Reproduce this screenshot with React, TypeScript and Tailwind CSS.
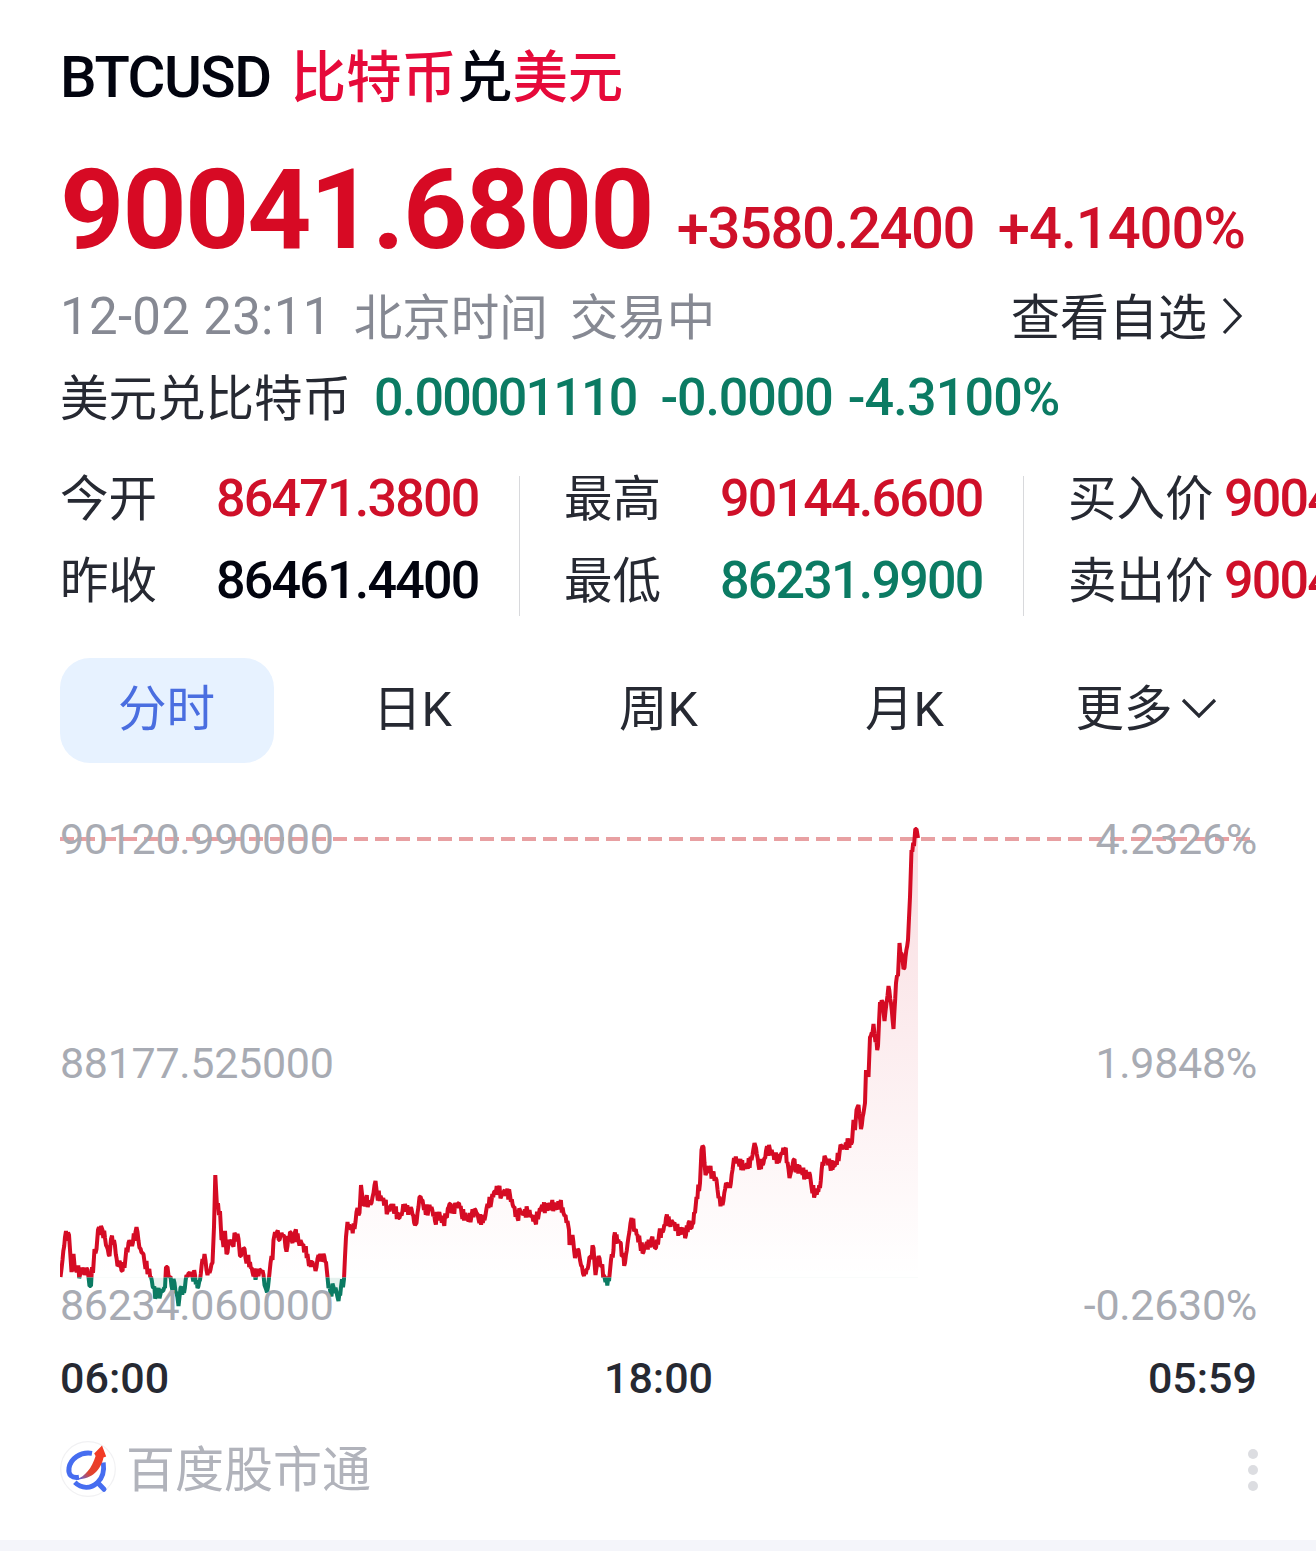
import { useState } from "react";

const CHART_LEFT = 60;
const CHART_TOP = 763;
const CHART_WIDTH = 1197;
const CHART_HEIGHT = 577;
const BASE_Y = 1277.5;

const trend =
  "60.5,1277 62.5,1260 65,1237 69,1235 70.5,1257 71.5,1272 73.5,1254 75,1271 77.5,1268 80,1275 82.5,1268 84.5,1275 86.5,1268 88.5,1277 89.5,1286 91,1286 92,1267 93,1273 94.5,1249 96.5,1249 98,1230 100,1235 101,1226 102.5,1230 105,1238 107,1247 109.5,1256 111,1239 114,1240 117.5,1266 119.5,1261 122.5,1271 125.5,1258 128.5,1243 133,1242 135.5,1232 137.5,1232 139.5,1248 142.5,1253 144.5,1262 148.5,1271 151,1277 153.5,1288 156,1296 157.5,1293 160.5,1294 162.5,1291 165,1288 166,1267 167.5,1267 169.5,1277 171.5,1286 174.5,1283 176.5,1293 178.5,1306 180.5,1288 184,1293 186.5,1275 189.5,1273 192.5,1277 195,1275 197.5,1288 200,1280 202.5,1259 204.5,1254 206.5,1270 209.5,1273 212.5,1263 214,1227 215.3,1175 217,1207 220,1211 221.5,1240 223.5,1247 225,1231 226.5,1254 229.5,1240 232.5,1245 235.5,1235 238.5,1239 240,1256 243.5,1248 245.5,1258 247.5,1258 252.5,1272 256.5,1275 260.5,1270 263.5,1275 264.5,1285 266,1289 268,1287 269.5,1273 270.5,1263 272.5,1260 273.5,1240 275,1232 277,1232 279.5,1240 281.5,1233 283.5,1235 285.5,1247 287.5,1246 290,1232 292.5,1243 295,1232 298.5,1241 301.5,1243 305,1250 307.5,1254 309,1266 312.5,1262 315.5,1271 318.5,1255 322,1260 323.5,1254 326,1262 327.5,1277 328.5,1288 330.5,1293 333.5,1287 336.5,1292 338.5,1301 341,1287 344,1279 346,1237 347.5,1222 350,1228 354.5,1229 356.5,1212 359.5,1213 361,1185 363.5,1206 366,1199 368.5,1204 371.5,1203 375.5,1181 377,1194 381.5,1199 385,1202 387.5,1212 391.5,1205 395,1210 398.5,1218 402.5,1211 405,1204 406.5,1211 411.5,1209 415,1225 416.5,1223 419.5,1197 422.5,1200 424,1210 428.5,1210 431.5,1207 435,1221 438.5,1214 443.5,1222 446,1217 449.5,1204 452.5,1211 456,1206 459,1203 461.5,1213 467.5,1219 471.5,1216 475.5,1210 478.5,1219 484.5,1220 487.5,1204 491.5,1201 494,1192 498.5,1189 501.5,1196 504,1191 506.5,1193 510,1195 513.5,1207 517.5,1218 520,1210 524,1214 527.5,1211 531.5,1216 535,1221 539,1213 541.5,1207 546.5,1208 551.5,1205 556.5,1208 560,1203 563.5,1213 567.5,1221 569,1230 569.5,1245 572.5,1235 575,1258 578.5,1250 580,1260 584,1276 588.5,1265 590.5,1257 593.5,1248 595.5,1275 598.5,1256 601.5,1266 604,1275 605.5,1282 609,1281 611,1260 613.5,1250 614,1237 620,1242 622.5,1256 625,1263 628.5,1237 631.5,1218 635,1230 640,1243 643.5,1252 646,1245 649.5,1245 651.5,1239 656,1248 659,1235 663.5,1230 666,1218 669.5,1223 672.5,1222 676.5,1228 680,1233 682.5,1228 686,1235 688.5,1223 691.5,1228 695,1213 696.5,1197 700,1183 701.5,1150 703.5,1147 704.5,1163 705.5,1175 708.5,1167 712.5,1175 716.5,1180 718.5,1198 722.5,1205 726,1183 730,1188 732.5,1170 734,1158 738.5,1162 745,1168 751.5,1160 754.5,1143 756,1148 758.5,1165 763.5,1163 766,1151 770,1150 775,1157 779.5,1160 781.5,1153 785,1149 787.5,1162 789.5,1178 793.5,1160 796.5,1170 800,1168 805,1175 810,1175 811.5,1187 815,1194 820,1188 822.5,1162 825.5,1158 830,1165 835,1166 839.5,1153 841.5,1146 845,1147 848.5,1143 852,1142 853.5,1120 855,1130 856.5,1110 858.5,1105 861,1129 863.5,1113 865,1103 866,1070 868.5,1077 870,1037 872.5,1033 873.5,1024 875.5,1042 878,1046 880,1002 882.5,1002 884.5,1021 886.5,1003 888.5,986 891,1003 893.5,1029 896,983 898,976 899.5,943 901.5,953 903.5,969 905.5,957 908,940 910,897 911.5,850 914,846 915.3,829 916.5,829 918,838";

// fill in the minute ticks between the trend points
const addTicks = (line: string) => {
  const pts = line.split(" ").map((p) => p.split(",").map(Number));
  const out: string[] = [];
  let n = 0;
  pts.forEach(([x, y], i) => {
    out.push(`${x},${y}`);
    const next = pts[i + 1];
    if (!next) return;
    const steps = Math.floor((next[0] - x) / 0.83);
    const swing = Math.abs(next[1] - y) > 15 ? 1.5 : 5.5;
    for (let s = 1; s < steps; s++) {
      n++;
      const noise = (n % 2 ? 1 : -1) * Math.abs(Math.sin(n * 12.9898)) * swing;
      const px = x + ((next[0] - x) * s) / steps;
      const py = y + ((next[1] - y) * s) / steps + noise;
      out.push(`${px.toFixed(1)},${py.toFixed(1)}`);
    }
  });
  return out.join(" ");
};

const points = addTicks(trend);

const tabs = ["分时", "日K", "周K", "月K"];

const priceLabels = [
  { price: "90120.990000", percent: "4.2326%", top: "top-[46px]" },
  { price: "88177.525000", percent: "1.9848%", top: "top-[270px]" },
  { price: "86234.060000", percent: "-0.2630%", top: "top-[512px]" },
];

const stats = [
  [
    { label: "今开", value: "86471.3800", color: "text-[#cf1029]" },
    { label: "昨收", value: "86461.4400", color: "text-[#02040f]" },
  ],
  [
    { label: "最高", value: "90144.6600", color: "text-[#cf1029]" },
    { label: "最低", value: "86231.9900", color: "text-[#0b7b63]" },
  ],
  [
    { label: "买入价", value: "90041.6800", color: "text-[#cf1029]" },
    { label: "卖出价", value: "90042.6800", color: "text-[#cf1029]" },
  ],
];

const Chart: React.FC = () => {
  const area = `M60.5,${BASE_Y} L${points} L918,${BASE_Y} Z`;

  return (
    <div className="relative h-[577px] w-[1197px]">
      <svg
        className="block"
        width={CHART_WIDTH}
        height={CHART_HEIGHT}
        viewBox={`${CHART_LEFT} ${CHART_TOP} ${CHART_WIDTH} ${CHART_HEIGHT}`}
        fill="none"
      >
        <defs>
          <linearGradient id="fill" gradientUnits="userSpaceOnUse" x1="0" y1="829" x2="0" y2={BASE_Y}>
            <stop offset="0" stopColor="#d70a24" stopOpacity="0.14" />
            <stop offset="1" stopColor="#d70a24" stopOpacity="0" />
          </linearGradient>
          <clipPath id="above">
            <rect x="60" y="763" width="1197" height={BASE_Y - 763} />
          </clipPath>
          <clipPath id="below">
            <rect x="60" y={BASE_Y} width="1197" height="60" />
          </clipPath>
        </defs>
        <line x1="60" y1="839" x2="1257" y2="839" stroke="#e8a0a2" strokeWidth="4" strokeDasharray="14 7" />
        <g clipPath="url(#above)">
          <path d={area} fill="url(#fill)" />
          <polyline points={points} stroke="#d50b24" strokeWidth="4" strokeLinejoin="bevel" />
        </g>
        <g clipPath="url(#below)">
          <path d={area} fill="#0b7b63" fillOpacity="0.1" />
          <polyline points={points} stroke="#0b7b63" strokeWidth="4" strokeLinejoin="bevel" />
        </g>
      </svg>
      {priceLabels.map((item) => (
        <div
          key={item.price}
          className={`absolute left-0 flex h-[60px] w-full items-center justify-between text-[43px] tracking-[-0.3px] text-[#a8abb3] ${item.top}`}
        >
          <span>{item.price}</span>
          <span>{item.percent}</span>
        </div>
      ))}
    </div>
  );
};

const Logo: React.FC = () => (
  <svg width="56" height="56" viewBox="0 0 56 56" fill="none">
    <defs>
      <linearGradient id="arrow" x1="17" y1="38" x2="38" y2="14" gradientUnits="userSpaceOnUse">
        <stop offset="0" stopColor="#4a6cf0" />
        <stop offset="0.4" stopColor="#e0432f" />
        <stop offset="1" stopColor="#f23b25" />
      </linearGradient>
    </defs>
    <circle cx="28" cy="28" r="27.3" stroke="#f1f1f3" strokeWidth="1.2" />
    <path d="M32 12.4C20 10.5 10.500 18 9 27C8 34 12 37.500 19 36.300" stroke="#466df0" strokeWidth="5" />
    <path d="M43.300 21.500C44.500 30 43 36.500 37.500 41.500C31 48 21.500 48 14.800 41.300" stroke="#466df0" strokeWidth="4.800" />
    <path d="M38 42L44 48.300" stroke="#466df0" strokeWidth="5" strokeLinecap="round" />
    <path d="M16.500 38.300C25 35.500 32 27 35.600 15L34.200 12.500L42 4.500L46.200 15.500L43.500 16.500C41 28.500 32 38.800 16.500 38.300Z" fill="url(#arrow)" />
  </svg>
);

const App: React.FC = () => {
  const [activeTab, setActiveTab] = useState("分时");

  return (
    <div className="flex h-[1551px] w-[1316px] flex-col overflow-hidden bg-white pt-9 font-['Roboto','Noto_Sans_CJK_SC',sans-serif] whitespace-nowrap text-[#262932]">
      <div className="flex h-[82px] items-center pl-[60px] text-[55.4px] font-medium">
        <span className="mr-[20px] text-[58px] tracking-[-1.4px] text-[#02040f]">BTCUSD</span>
        <span className="pt-1 text-[#e60a3a]">比特币</span>
        <span className="pt-1 text-[#02040f]">兑</span>
        <span className="pt-1 text-[#e60a3a]">美元</span>
      </div>

      <div className="flex h-[158px] items-baseline pl-[60px] leading-[183px] text-[#cf1029]">
        <span className="text-[112px] font-bold tracking-[-1.8px] text-[#d70a24]">90041.6800</span>
        <span className="ml-[24px] text-[58px] font-medium tracking-[-1.5px]">+3580.2400</span>
        <span className="ml-[24px] text-[58px] font-medium tracking-[-1.1px]">+4.1400%</span>
      </div>

      <div className="flex h-20 items-center pl-[60px] pr-[73px] text-[48.5px] text-[#868993]">
        <span className="pt-0.5 text-[51px] tracking-[0.3px]">12-02 23:11</span>
        <span className="ml-[22px] pt-1.5">北京时间</span>
        <span className="ml-[22px] pt-1.5">交易中</span>
        <button className="ml-auto flex items-center text-[49px] text-[#262932]">
          <span className="pt-1.5">查看自选</span>
          <svg className="ml-[14px]" width="22" height="38" viewBox="0 0 22 38" fill="none">
            <path d="M3 2L19 19L3 36" stroke="#262932" strokeWidth="3.2" />
          </svg>
        </button>
      </div>

      <div className="flex h-[82px] items-center pl-[60px] text-[48.5px]">
        <span className="pt-1.5">美元兑比特币</span>
        <div className="flex pt-0.5 text-[52px] font-medium text-[#0b7b63]">
          <span className="ml-[23px] tracking-[-1.8px]">0.00001110</span>
          <span className="ml-[24px] tracking-[-1.1px]">-0.0000</span>
          <span className="ml-[15px] tracking-[-0.8px]">-4.3100%</span>
        </div>
      </div>

      <div className="mt-[19px] flex h-[164px] pl-[60px] text-[48.5px]">
        {stats.map((column, i) => (
          <div key={i} className="flex shrink-0">
            {i > 0 && <div className="mt-[19px] mr-11 ml-10 h-[140px] w-px bg-[#d8d9dc]" />}
            <div className="w-[419px]">
              {column.map((stat) => (
                <div key={stat.label} className="flex h-[82px] items-center">
                  <span className="w-[156px] shrink-0 pt-1">{stat.label}</span>
                  <span className={`pt-0.5 text-[52px] font-medium tracking-[-1.8px] ${stat.color}`}>{stat.value}</span>
                </div>
              ))}
            </div>
          </div>
        ))}
      </div>

      <div className="mt-[37px] flex h-[105px] gap-[32px] pl-[60px] text-[48.5px]">
        {tabs.map((tab) => (
          <button
            key={tab}
            onClick={() => setActiveTab(tab)}
            className={`h-full w-[214px] rounded-[30px] pr-[1px] ${activeTab === tab ? "bg-[#e7f2ff] text-[#4a6ee0]" : ""}`}
          >
            {tab}
          </button>
        ))}
        <button className="flex h-full w-[214px] items-center justify-center pr-[10px]">
          更多
          <svg className="mb-1 ml-[8px]" width="36" height="22" viewBox="0 0 36 22" fill="none">
            <path d="M2 2L18 18L34 2" stroke="#262932" strokeWidth="3.2" />
          </svg>
        </button>
      </div>

      <div className="ml-[60px]">
        <Chart />
        <div className="flex h-[76px] w-[1197px] items-center justify-between text-[43px] font-medium">
          <span>06:00</span>
          <span>18:00</span>
          <span>05:59</span>
        </div>
      </div>

      <div className="flex h-[106px] items-center pr-[58px] pl-[60px]">
        <Logo />
        <span className="ml-[10px] pt-1 text-[49px] text-[#b1b3bb]">百度股市通</span>
        <div className="mt-0.5 ml-auto flex flex-col gap-[6px]">
          <i className="size-[10px] rounded-full bg-[#dcdde1]" />
          <i className="size-[10px] rounded-full bg-[#dcdde1]" />
          <i className="size-[10px] rounded-full bg-[#dcdde1]" />
        </div>
      </div>
      <div className="mt-[18px] h-[11px] bg-[#f4f5fa]" />
    </div>
  );
};

export default App;
